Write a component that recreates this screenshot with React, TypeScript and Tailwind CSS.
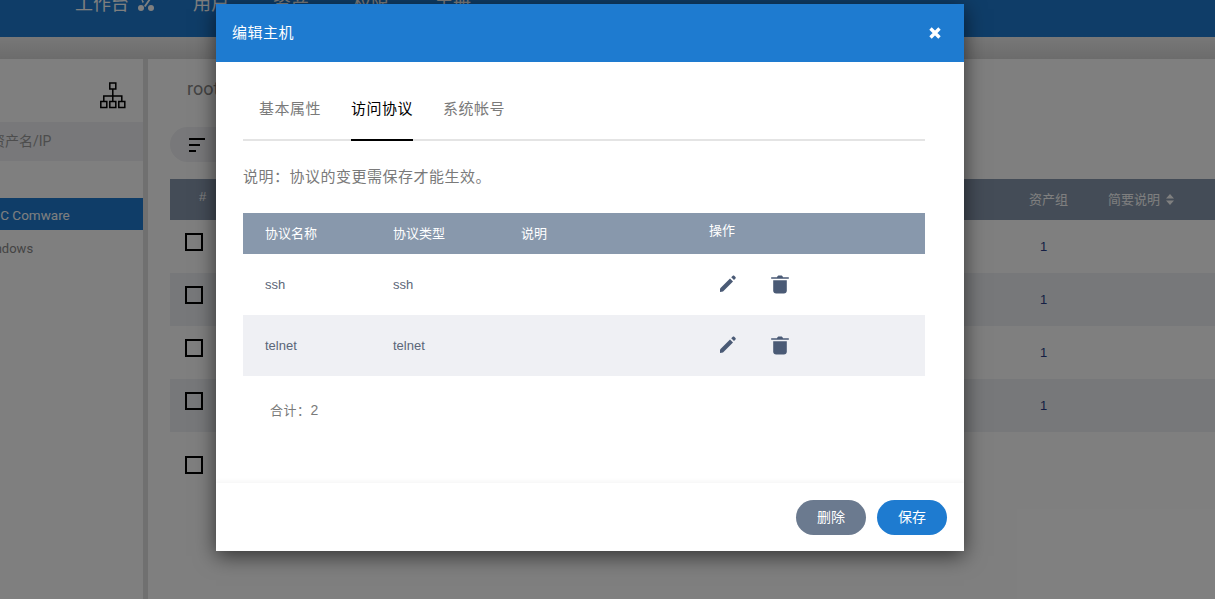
const FONT_STACK = 'font-["Liberation_Sans","Noto_Sans_CJK_SC",sans-serif]'

const navItems = [
  { label: '用户', className: 'ml-[38px]' },
  { label: '资产', className: 'ml-[44px]' },
  { label: '权限', className: 'ml-[44px]' },
  { label: '手册', className: 'ml-[46px]' },
]

const protocols = [
  { name: 'ssh', type: 'ssh', striped: false },
  { name: 'telnet', type: 'telnet', striped: true },
]

function EditIcon() {
  return (
    <svg width="24" height="24" viewBox="0 0 24 24" fill="#4a5a75">
      <path d="M4 16.500L14 6.500l3 3L7 19.500l-3 .5z" />
      <path d="M15.200 5.300l1.600-1.600c.4-.4 1-.4 1.400 0l1.300 1.300c.4.4.4 1 0 1.400L18 8z" />
    </svg>
  )
}

function TrashIcon() {
  return (
    <svg width="18" height="19" viewBox="0 0 18 19" fill="#4a5a75">
      <path d="M6 2.2C6.300 1 7 .4 8 .4h2c1 0 1.700.6 2 1.800h5.400c.4 0 .6.300.6.800s-.2.800-.6.800H.6C.2 3.800 0 3.500 0 3s.2-.8.6-.8H6z" />
      <path d="M2.200 5.200h13.600v10.300c0 1.900-1.100 3-3 3H5.200c-1.900 0-3-1.100-3-3V5.200z" />
    </svg>
  )
}

function TreeIcon() {
  return (
    <svg width="28" height="27" viewBox="0 0 28 27" fill="none" stroke="#000" strokeWidth="1.500" className="mr-[16px]">
      <rect x="10.800" y="1" width="6" height="6" />
      <rect x="1.800" y="19.500" width="6" height="6" />
      <rect x="10.800" y="19.500" width="6" height="6" />
      <rect x="19.800" y="19.500" width="6" height="6" />
      <path d="M13.800 7v12.500M4.800 19.500V14h18v5.500" />
    </svg>
  )
}

function SortIcon() {
  return (
    <svg width="8" height="11" viewBox="0 0 8 11" fill="#fff" className="ml-[6px]">
      <path d="M4 0l4 4.500H0zM4 11L0 6.500h8z" />
    </svg>
  )
}

function AssetRow({ striped, extraTop }: { striped: boolean; extraTop?: boolean }) {
  return (
    <div className={`flex h-[53px] ${striped ? 'bg-[#eff0f4]' : ''}`}>
      <div className={`ml-[15px] ${extraTop ? 'mt-[24px]' : 'mt-[13px]'} box-border h-[18px] w-[18px] border-[2px] border-black`} />
      <div className="flex-1" />
      {!extraTop && <div className="w-[79px] pl-[11px] pt-[18px] text-[13px] leading-[17px] text-[#2a3f88]">1</div>}
      <div className="w-[107px]" />
    </div>
  )
}

function Page() {
  return (
    <div className="flex h-full flex-col bg-white">
      <div className="flex h-[37px] shrink-0 overflow-hidden bg-[#1e7bd0] pl-[75px] text-[18px] leading-[24px] text-white">
        <div className="-mt-[8px] flex">
          <span>工作台</span>
          <svg width="18" height="18" viewBox="0 0 18 18" className="ml-[8px] mt-[4px]" fill="#fff">
            <circle cx="4" cy="12" r="3" />
            <circle cx="14" cy="12" r="3" />
            <path d="M3 0l4 6-1.500 1zM14 0l1.500 1-7 10-1.500-1z" />
          </svg>
          {navItems.map((item) => (
            <span key={item.label} className={item.className}>
              {item.label}
            </span>
          ))}
        </div>
      </div>
      <div className="h-[22px] shrink-0 bg-gradient-to-b from-[#f0f0f0] to-[#d8d8d8]" />
      <div className="flex min-h-0 flex-1">
        <aside className="w-[143px] shrink-0 overflow-hidden pt-[23px] font-['Roboto','Noto_Sans_CJK_SC',sans-serif]">
          <div className="flex justify-end">
            <TreeIcon />
          </div>
          <div className="mt-[13px] flex h-[39px] items-center whitespace-nowrap bg-[#f0f1f4] text-[14px] text-[#9a9a9a]">
            <span className="-ml-[9px]">资产名/IP</span>
          </div>
          <div className="mt-[37px] flex h-[32px] items-center whitespace-nowrap bg-[#1e7bd0] pt-[2px] text-[13.500px] text-white">
            <span className="-ml-[17px]">H3C Comware</span>
          </div>
          <div className="flex h-[37px] items-center whitespace-nowrap text-[13px] text-[#888]">
            <span className="-ml-[20px]">Windows</span>
          </div>
        </aside>
        <div className="w-[5px] shrink-0 bg-[#e0e0e0]" />
        <main className="min-w-0 flex-1 pl-[22px]">
          <div className="pl-[17px] pt-[18px] font-['Roboto',sans-serif] text-[18px] leading-[24px] text-[#888]">root</div>
          <div className="mt-[26px] flex h-[35px] w-[120px] items-center rounded-full bg-[#f0f1f4] pl-[18px]">
            <svg width="18" height="15" viewBox="0 0 18 15" fill="none" stroke="#000" strokeWidth="2">
              <path d="M1 2h16M1 8h11M1 14h7" />
            </svg>
          </div>
          <div className="mt-[17px] flex h-[41px] bg-[#8899ae] text-[13px] text-white">
            <div className="ml-[29px] mt-[8px]">#</div>
            <div className="flex-1" />
            <div className="flex w-[79px] items-center">资产组</div>
            <div className="flex w-[107px] items-center">
              简要说明
              <SortIcon />
            </div>
          </div>
          <AssetRow striped={false} />
          <AssetRow striped />
          <AssetRow striped={false} />
          <AssetRow striped />
          <AssetRow striped={false} extraTop />
        </main>
      </div>
    </div>
  )
}

function ProtocolTable() {
  return (
    <div className="mt-[25px] text-[13px]">
      <div className="flex h-[41px] items-center bg-[#8898ac] pl-[22px] text-white">
        <div className="w-[128px]">协议名称</div>
        <div className="w-[128px]">协议类型</div>
        <div className="w-[188px]">说明</div>
        <div className="pb-[5px]">操作</div>
      </div>
      {protocols.map((row) => (
        <div
          key={row.name}
          className={`flex h-[61px] items-center pl-[22px] text-[#5b6678] ${row.striped ? 'bg-[#eff0f4]' : ''}`}
        >
          <div className="w-[128px]">{row.name}</div>
          <div className="w-[128px]">{row.type}</div>
          <div className="w-[188px]" />
          <div className="ml-[7px] flex items-center pb-[1px]">
            <EditIcon />
            <div className="ml-[31px]">
              <TrashIcon />
            </div>
          </div>
        </div>
      ))}
    </div>
  )
}

function EditHostModal() {
  return (
    <div className="absolute left-[216px] top-[4px] flex h-[547px] w-[748px] flex-col bg-white shadow-[0_5px_20px_rgba(0,0,0,0.6)]">
      <div className="flex h-[58px] shrink-0 items-center justify-between bg-[#1e7bd0] pl-[16px] pr-[23px] text-[15px] tracking-[0.5px] text-white">
        <span>编辑主机</span>
        <svg width="12" height="12" viewBox="0 0 12 12" stroke="#fff" strokeWidth="3.400">
          <path d="M1.500 1.500l9 9M10.500 1.500l-9 9" />
        </svg>
      </div>
      <div className="min-h-0 flex-1 pl-[27px] pr-[39px]">
        <div className="mt-[26px] flex h-[53px] gap-[30px] border-b-2 border-[#e4e4e4] pl-[16px] text-[15px] tracking-[0.5px] text-[#7a7a7a]">
          <div className="h-[53px] pt-[10px]">基本属性</div>
          <div className="box-border h-[53px] border-b-2 border-black pt-[10px] text-black">访问协议</div>
          <div className="h-[53px] pt-[10px]">系统帐号</div>
        </div>
        <p className="mt-[25px] text-[15px] leading-[22px] tracking-[0.5px] text-[#7a7a7a]">说明：协议的变更需保存才能生效。</p>
        <ProtocolTable />
        <div className="ml-[27px] mt-[25px] text-[13px] leading-[18px] tracking-[0.5px] text-[#7a7a7a]">
          合计：<span className="text-[14px]">2</span>
        </div>
      </div>
      <div className="flex h-[68px] shrink-0 items-start justify-end gap-[11px] pr-[17px] pt-[17px] text-[14px] text-white shadow-[0_-2px_4px_rgba(0,0,0,0.04)]">
        <button className="h-[35px] w-[70px] rounded-full bg-[#6b7a8f]">删除</button>
        <button className="h-[35px] w-[70px] rounded-full bg-[#1e7bd0]">保存</button>
      </div>
    </div>
  )
}

export default function App() {
  return (
    <div className={`relative h-[599px] w-[1215px] overflow-hidden ${FONT_STACK}`}>
      <Page />
      <div className="absolute inset-0 bg-black/50" />
      <EditHostModal />
    </div>
  )
}
